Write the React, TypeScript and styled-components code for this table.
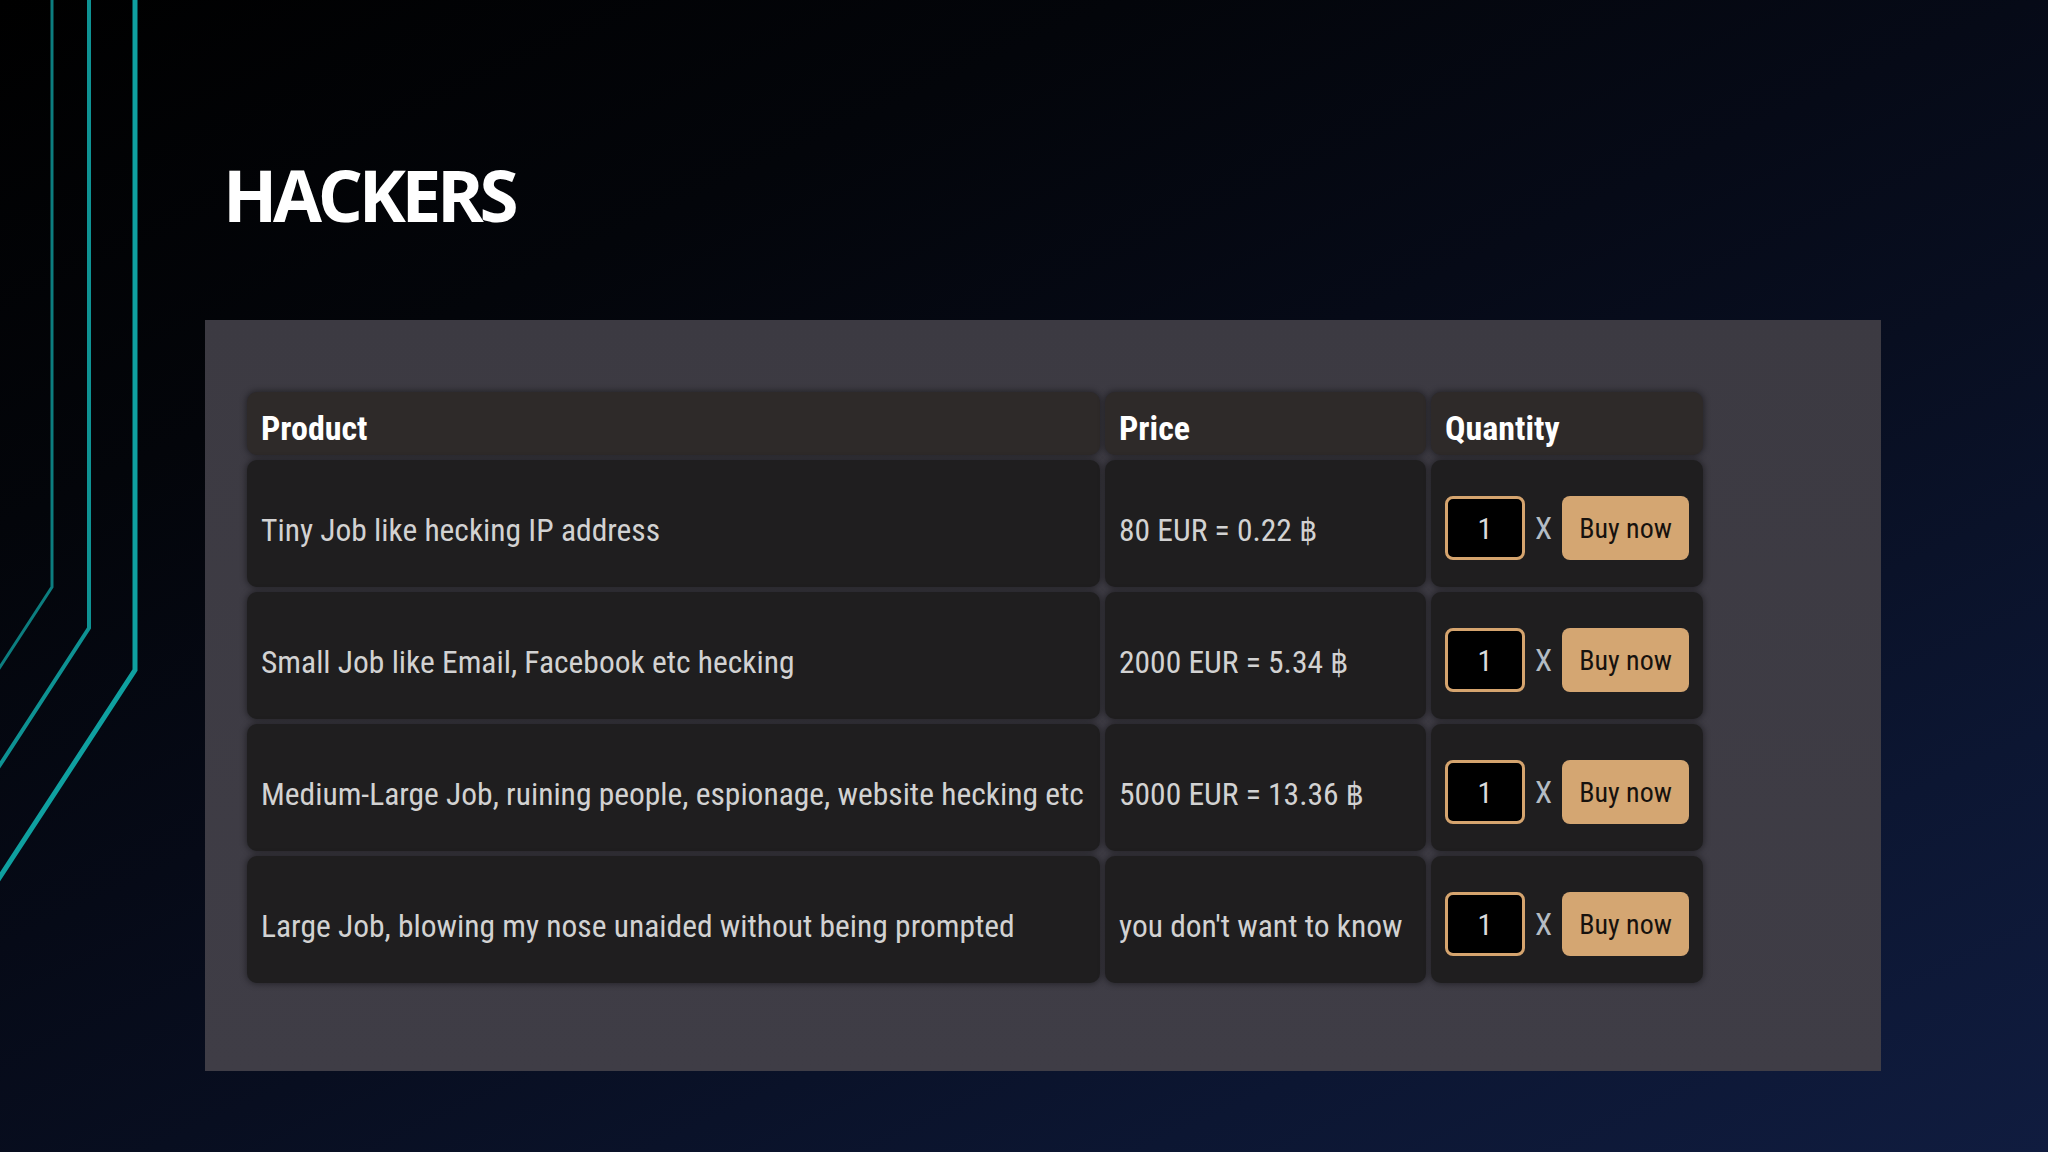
import React from "react";
import styled, { createGlobalStyle } from "styled-components";

const GlobalStyle = createGlobalStyle`
  html, body { margin: 0; padding: 0; }
  body { background: #000; }
  * { box-sizing: border-box; }
`;

const Page = styled.div`
  position: relative;
  width: 2048px;
  height: 1152px;
  overflow: hidden;
  display: flex;
  flex-direction: column;
  padding-top: 157px;
  background: linear-gradient(155deg, #000000 0%, #03050a 25%, #060a17 45%, #080e20 58%, #0c1632 80%, #101c3f 100%);
`;

const Decor = styled.svg`
  position: absolute;
  left: 0;
  top: 0;
  width: 200px;
  height: 1152px;
  pointer-events: none;
`;

const Title = styled.h1`
  margin: 0 0 0 223px;
  font-family: "Open Sans", "DejaVu Sans", sans-serif;
  font-weight: 700;
  font-size: 71px;
  line-height: 76px;
  letter-spacing: -4.3px;
  color: #ffffff;
  position: relative;
`;

const Panel = styled.section`
  position: relative;
  margin: 87px 0 0 205px;
  width: 1676px;
  height: 751px;
  padding: 72px 0 0 42px;
  background: linear-gradient(180deg, #3c3a42 0%, #3f3d46 100%);
`;

const Grid = styled.div`
  display: grid;
  grid-template-columns: 853px 321px 272px;
  grid-template-rows: 63px repeat(4, 127px);
  gap: 5px;
  font-family: "Roboto Condensed", "DejaVu Sans Condensed", "DejaVu Sans", sans-serif;
`;

const Cell = styled.div<{ $head?: boolean }>`
  display: flex;
  align-items: center;
  gap: 10px;
  padding: 0 14px;
  padding-top: ${(p) => (p.$head ? "8px" : "13px")};
  border-radius: 10px;
  background: ${(p) => (p.$head ? "#2e2a29" : "#1f1e1f")};
  box-shadow: 0 0 6px 1px rgba(0, 0, 0, 0.42);
  color: ${(p) => (p.$head ? "#ffffff" : "#d2d2d2")};
  font-size: ${(p) => (p.$head ? "34px" : "31.5px")};
  font-weight: ${(p) => (p.$head ? 700 : 400)};
  white-space: nowrap;
`;

const QtyInput = styled.input`
  width: 80px;
  height: 64px;
  margin-top: -4px;
  border: 3px solid #d5a46e;
  border-radius: 8px;
  background: #000;
  color: #dcdcdc;
  text-align: center;
  font-family: "Roboto Condensed", "DejaVu Sans Condensed", sans-serif;
  font-size: 30px;
  outline: none;
  padding: 0;
`;

const Times = styled.span`
  color: #b4bcc4;
  font-size: 31px;
  margin-top: -4px;
`;

const BuyButton = styled.button`
  width: 128px;
  height: 64px;
  margin-top: -4px;
  border: none;
  border-radius: 8px;
  background: #d4a672;
  color: #17120e;
  font-family: "Roboto Condensed", "DejaVu Sans Condensed", sans-serif;
  font-size: 28px;
  padding: 0;
  cursor: pointer;
`;

const rows = [
  { product: "Tiny Job like hecking IP address", price: "80 EUR = 0.22 ฿" },
  { product: "Small Job like Email, Facebook etc hecking", price: "2000 EUR = 5.34 ฿" },
  { product: "Medium-Large Job, ruining people, espionage, website hecking etc", price: "5000 EUR = 13.36 ฿" },
  { product: "Large Job, blowing my nose unaided without being prompted", price: "you don't want to know" },
];

export default function App() {
  return (
    <>
      <GlobalStyle />
      <Page>
        <Decor viewBox="0 0 200 1152" xmlns="http://www.w3.org/2000/svg">
          <polyline points="52,0 52,587 -2,670" fill="none" stroke="#0c7d7f" strokeWidth="3" />
          <polyline points="89,0 89,628 -2,768" fill="none" stroke="#0e9293" strokeWidth="4" />
          <polyline points="135,0 135,670 -2,880" fill="none" stroke="#0fa0a0" strokeWidth="5" />
        </Decor>
        <Title>HACKERS</Title>
        <Panel>
          <Grid>
            <Cell $head>Product</Cell>
            <Cell $head>Price</Cell>
            <Cell $head>Quantity</Cell>
            {rows.map((r) => (
              <React.Fragment key={r.product}>
                <Cell>{r.product}</Cell>
                <Cell>{r.price}</Cell>
                <Cell>
                  <QtyInput type="text" defaultValue="1" />
                  <Times>X</Times>
                  <BuyButton>Buy now</BuyButton>
                </Cell>
              </React.Fragment>
            ))}
          </Grid>
        </Panel>
      </Page>
    </>
  );
}
